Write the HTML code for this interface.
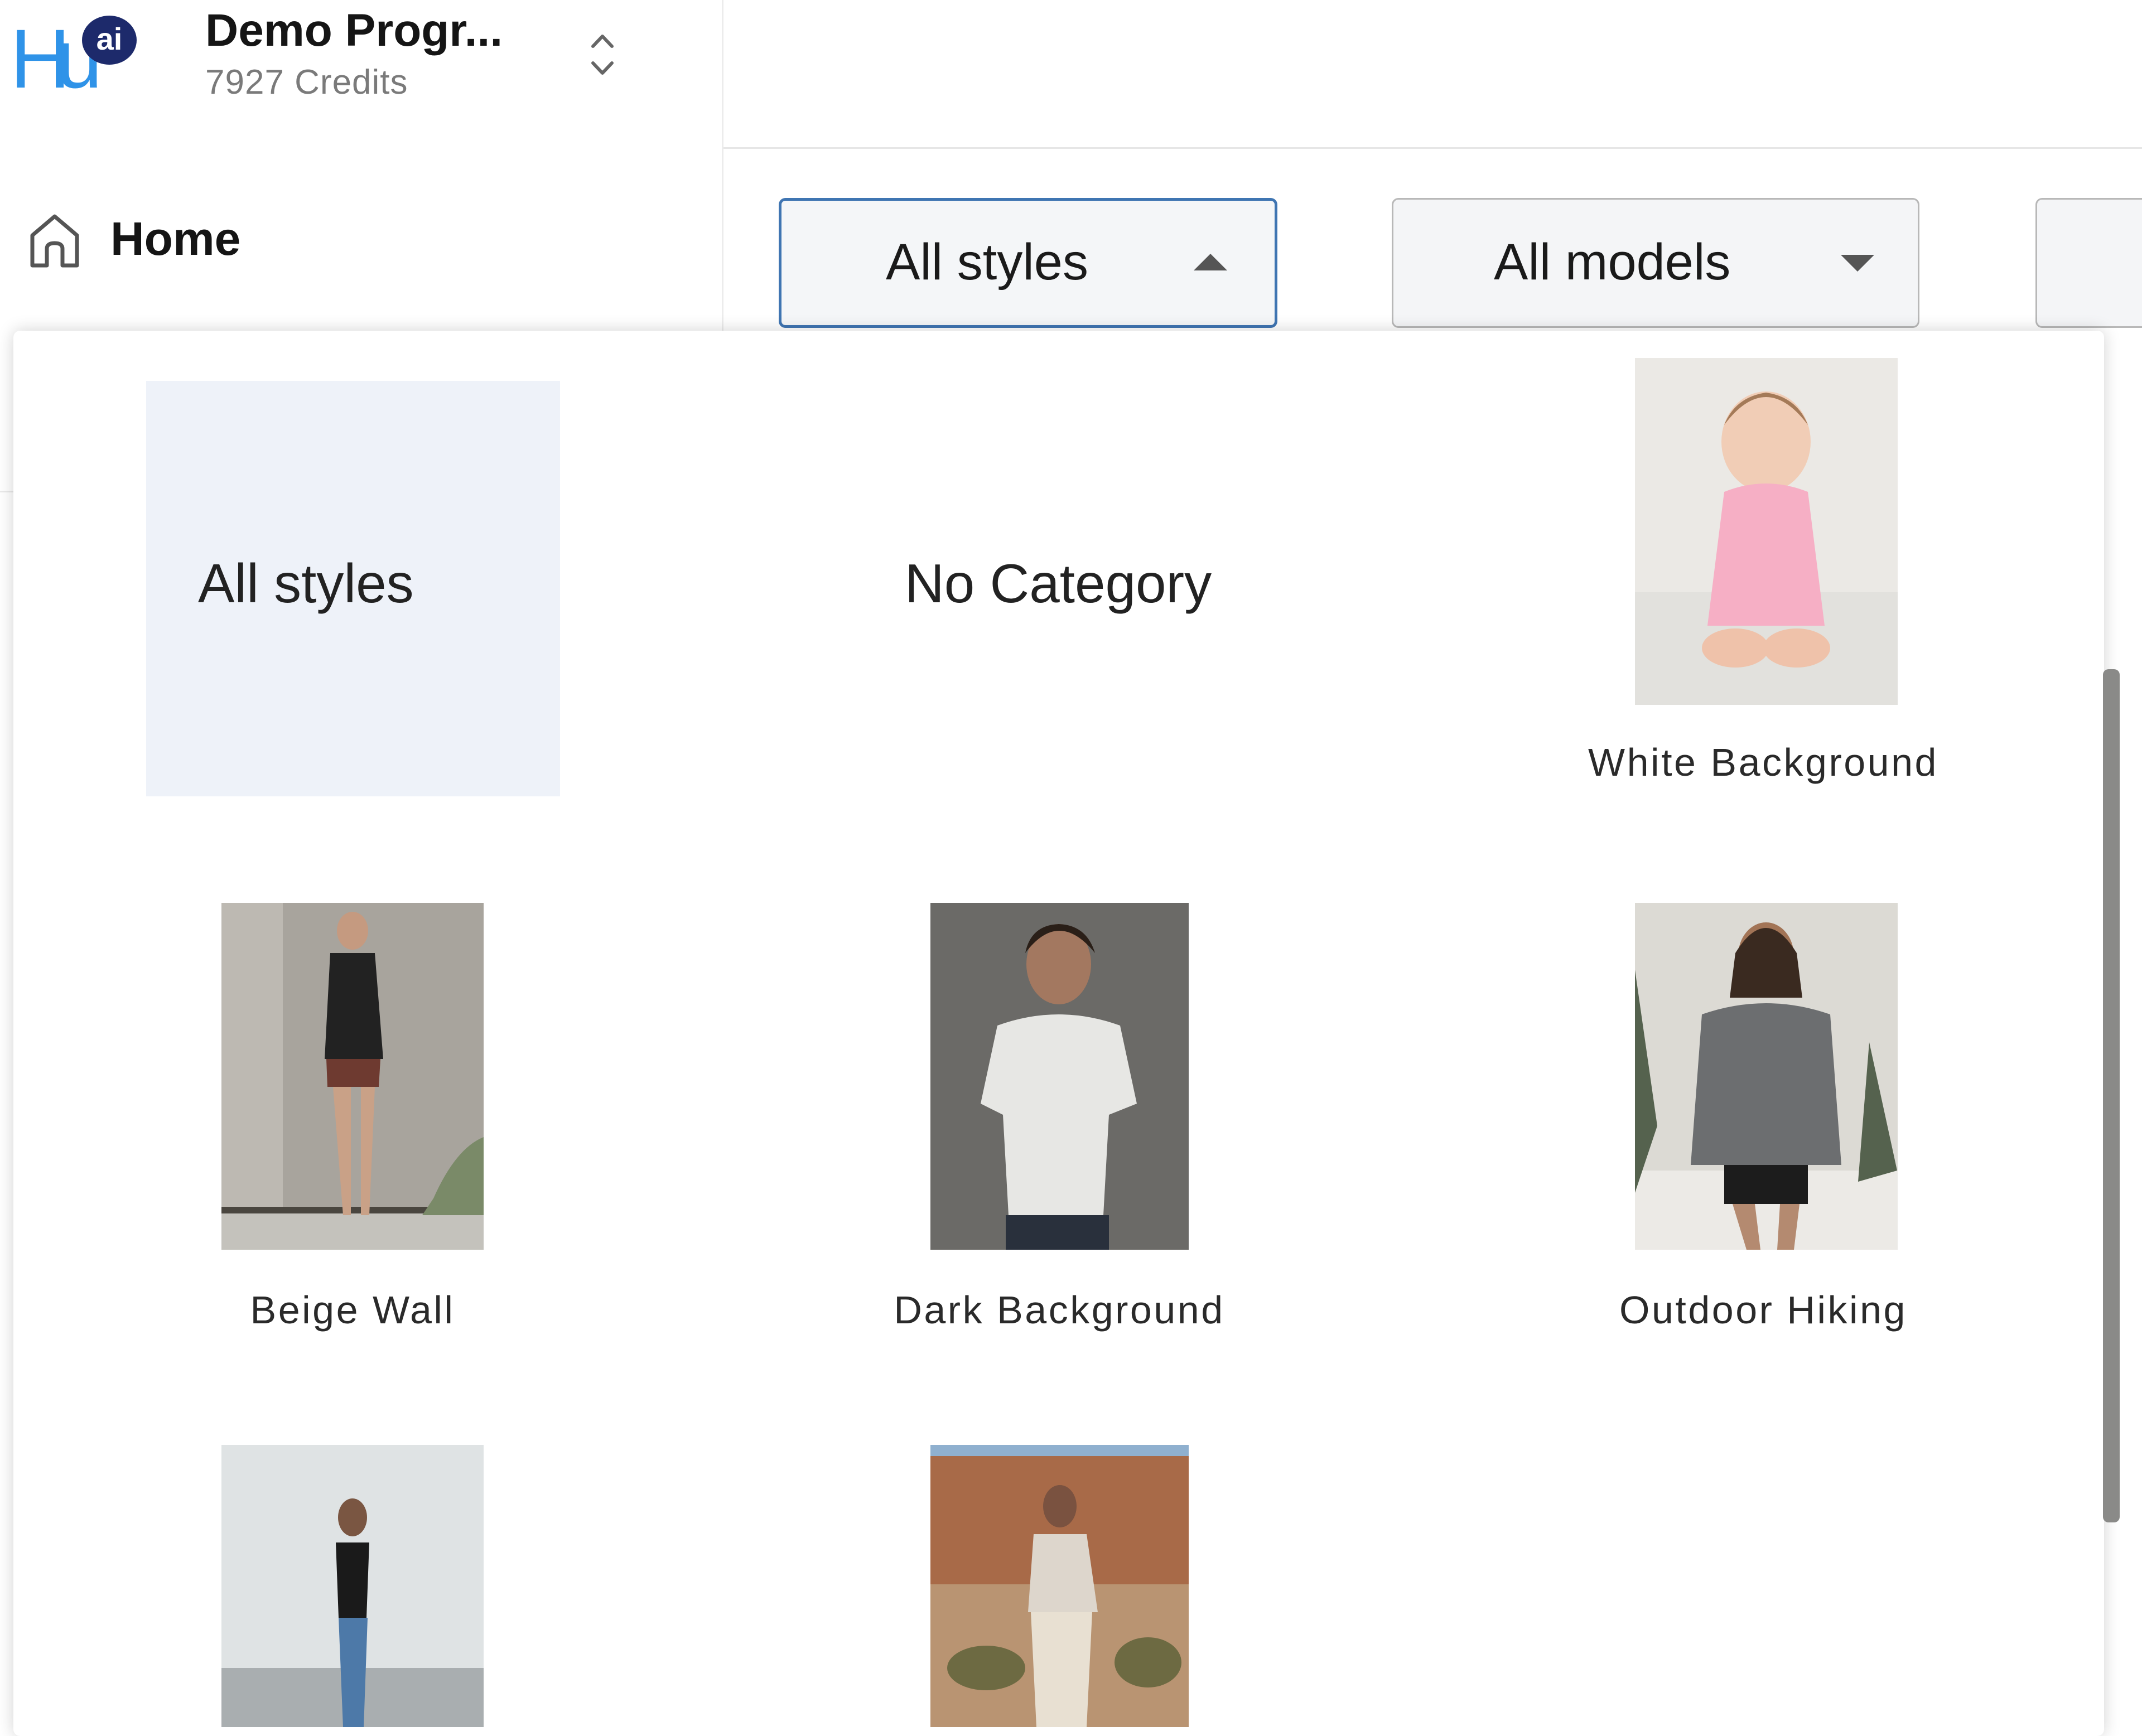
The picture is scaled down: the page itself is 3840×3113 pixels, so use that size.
<!DOCTYPE html>
<html><head><meta charset="utf-8"><style>
*{margin:0;padding:0;box-sizing:border-box}
body{width:3840px;height:3097px;position:relative;overflow:hidden;background:#fff;font-family:"Liberation Sans",Arial,sans-serif;color:#1f1f1f}
.abs{position:absolute}
.btn{position:absolute;top:355px;height:233px;background:#f4f5f7;border:3px solid #b8b8b8;border-radius:12px}
.lbl{position:absolute;font-size:70px;letter-spacing:3.5px;color:#2a2a2a;text-align:center;width:900px;white-space:nowrap}
.img{position:absolute;overflow:hidden}
</style></head><body>
<div class="abs" style="left:1294px;top:0;width:3px;height:3097px;background:#ececec"></div>
<div class="abs" style="left:1297px;top:264px;width:2543px;height:3px;background:#e6e6e6"></div>
<div class="abs" style="left:0;top:880px;width:1294px;height:3px;background:#eaeaea"></div>
<div class="abs" style="left:18px;top:30px;font-size:150px;color:#2f93e8;letter-spacing:-26px;line-height:150px">Hu</div>
<div class="abs" style="left:147px;top:28px;width:98px;height:88px;border-radius:50%;background:#1d2a6b;color:#fff;font-size:56px;font-weight:bold;text-align:center;line-height:84px">ai</div>
<div class="abs" style="left:368px;top:8px;font-size:82px;font-weight:bold;color:#151515">Demo Progr...</div>
<div class="abs" style="left:368px;top:112px;font-size:62px;color:#7a7a7a;letter-spacing:1px">7927 Credits</div>
<svg class="abs" style="left:1055px;top:55px" width="50" height="85" viewBox="0 0 50 85"><path d="M8 28 L25 10 L42 28 M8 58 L25 76 L42 58" fill="none" stroke="#666" stroke-width="6" stroke-linecap="round" stroke-linejoin="round"/></svg>
<svg class="abs" style="left:50px;top:380px" width="96" height="105" viewBox="0 0 96 105"><path d="M8 96 V42 L48 8 L88 42 V96 H62 V66 Q62 56 48 56 Q34 56 34 66 V96 Z" fill="none" stroke="#555" stroke-width="7" stroke-linejoin="round"/></svg>
<div class="abs" style="left:198px;top:380px;font-size:84px;font-weight:bold;color:#151515">Home</div>
<div class="btn" style="left:1396px;width:894px;border:5px solid #3f75b2;background:#f4f6f8"></div>
<div class="abs" style="left:1588px;top:418px;font-size:92px;color:#1a1a1a">All styles</div>
<svg class="abs" style="left:2138px;top:453px" width="64" height="34"><path d="M2 32 L32 2 L62 32Z" fill="#555"/></svg>
<div class="btn" style="left:2495px;width:946px"></div>
<div class="abs" style="left:2678px;top:418px;font-size:92px;color:#1a1a1a">All models</div>
<svg class="abs" style="left:3298px;top:455px" width="64" height="34"><path d="M2 2 L32 32 L62 2Z" fill="#555"/></svg>
<div class="btn" style="left:3649px;width:300px"></div>
<div class="abs" style="left:24px;top:593px;width:3748px;height:2520px;background:#fff;border-radius:12px;box-shadow:0 0 30px rgba(0,0,0,.18)"></div>
<div class="abs" style="left:3770px;top:1200px;width:30px;height:1530px;background:#8a8a88;border-radius:10px"></div>
<div class="abs" style="left:262px;top:683px;width:742px;height:745px;background:#eef2f9"></div>
<div class="abs" style="left:355px;top:990px;font-size:98px;color:#222">All styles</div>
<div class="abs" style="left:1622px;top:990px;font-size:98px;color:#222">No Category</div>
<svg class="img" style="left:2931px;top:642px" width="471" height="622" viewBox="0 0 471 622">
<rect width="471" height="622" fill="#ebe9e5"/><rect y="420" width="471" height="202" fill="#e2e1dd"/>
<ellipse cx="235" cy="150" rx="80" ry="90" fill="#f1cdb6"/><path d="M160 120 Q235 20 310 120 Q290 70 235 62 Q180 70 160 120Z" fill="#a47a58"/>
<path d="M160 240 Q235 210 310 240 L340 480 L130 480Z" fill="#f6afc5"/>
<ellipse cx="180" cy="520" rx="60" ry="35" fill="#efc2aa"/><ellipse cx="290" cy="520" rx="60" ry="35" fill="#efc2aa"/></svg>
<div class="lbl" style="left:2711px;top:1327px">White Background</div>
<svg class="img" style="left:397px;top:1619px" width="470" height="622" viewBox="0 0 470 622">
<rect width="470" height="622" fill="#a8a49d"/><rect width="110" height="560" fill="#bdb9b2"/><rect y="555" width="470" height="67" fill="#c4c2bc"/><rect y="545" width="470" height="12" fill="#4a463f"/>
<path d="M380 530 Q420 440 470 420 V560 H360Z" fill="#7a8a68"/>
<ellipse cx="235" cy="50" rx="28" ry="34" fill="#c59a80"/>
<path d="M195 90 L275 90 L290 280 L185 280Z" fill="#222"/><path d="M188 280 H285 L282 330 H190Z" fill="#6e3a30"/>
<path d="M200 330 L218 560 L232 560 L232 330 M250 330 L250 560 L265 560 L275 330" fill="#c9a187"/></svg>
<div class="lbl" style="left:182px;top:2309px">Beige Wall</div>
<svg class="img" style="left:1668px;top:1619px" width="463" height="622" viewBox="0 0 463 622">
<rect width="463" height="622" fill="#6b6a67"/>
<ellipse cx="230" cy="110" rx="58" ry="72" fill="#a37860"/><path d="M170 90 Q230 10 295 90 Q280 40 230 38 Q180 40 170 90Z" fill="#2a1f18"/>
<path d="M120 220 Q230 180 340 220 L370 360 L320 380 L310 560 L140 560 L130 380 L90 360Z" fill="#e7e7e4"/>
<rect x="135" y="560" width="185" height="62" fill="#29303c"/></svg>
<div class="lbl" style="left:1449px;top:2309px">Dark Background</div>
<svg class="img" style="left:2931px;top:1619px" width="471" height="622" viewBox="0 0 471 622">
<rect width="471" height="622" fill="#dcdad4"/><rect y="480" width="471" height="142" fill="#eceae6"/>
<path d="M0 120 L40 400 L0 520Z M420 250 L470 480 L400 500Z" fill="#55624e"/>
<ellipse cx="235" cy="95" rx="50" ry="60" fill="#a27456"/><path d="M180 90 Q235 0 290 90 L300 170 L170 170Z" fill="#3a2a20"/>
<path d="M120 200 Q235 160 350 200 L370 470 L100 470Z" fill="#6c6e70"/><rect x="160" y="470" width="150" height="70" fill="#1c1c1c"/>
<path d="M175 540 L200 622 H225 L215 540Z M260 540 L255 622 H285 L295 540Z" fill="#b48a70"/></svg>
<div class="lbl" style="left:2711px;top:2309px">Outdoor Hiking</div>
<svg class="img" style="left:397px;top:2591px" width="470" height="506" viewBox="0 0 470 506">
<rect width="470" height="506" fill="#dfe3e4"/><rect y="400" width="470" height="106" fill="#a9aeb0"/>
<ellipse cx="235" cy="130" rx="26" ry="34" fill="#7a5642"/><path d="M205 175 H265 L260 310 H210Z" fill="#1a1a1a"/>
<path d="M210 310 H262 L255 506 H218Z" fill="#4d79a8"/></svg>
<svg class="img" style="left:1668px;top:2591px" width="463" height="506" viewBox="0 0 463 506">
<rect width="463" height="506" fill="#a86a48"/><rect y="0" width="463" height="20" fill="#8fb0cf"/><rect y="250" width="463" height="256" fill="#b99472"/>
<ellipse cx="100" cy="400" rx="70" ry="40" fill="#6d6a42"/><ellipse cx="390" cy="390" rx="60" ry="45" fill="#6d6a42"/>
<ellipse cx="232" cy="110" rx="30" ry="38" fill="#7a5240"/><path d="M185 160 H280 L300 300 H175Z" fill="#ddd6cc"/>
<path d="M180 300 H290 L280 506 H190Z" fill="#e8e0d2"/></svg>
</body></html>
